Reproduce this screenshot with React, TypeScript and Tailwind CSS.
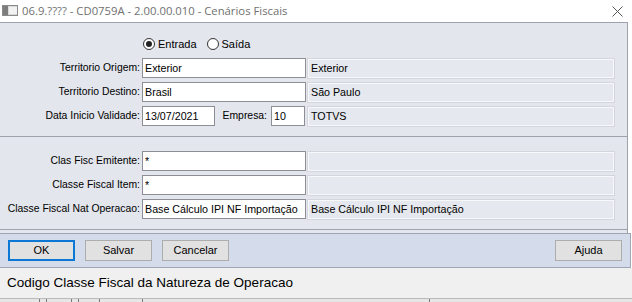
import React from "react";

const label = "text-[10.4px] text-black";
const font = { fontFamily: '"Liberation Sans", Arial, sans-serif' };

const Input = ({ value, w }: { value: string; w: string }) => (
  <div className={`${w} h-[20px] bg-white border border-[#8d8f94] flex items-center pl-[2px] text-[10.7px] text-black whitespace-nowrap overflow-hidden`}>
    {value}
  </div>
);

const ReadBox = ({ value }: { value?: string }) => (
  <div className="w-[306px] h-[19px] ml-auto bg-[#e5e8ee] border border-[#f7f8fa] outline outline-1 outline-[#d3d6dd] flex items-center pl-[2px] text-[10.7px] text-black whitespace-nowrap">
    {value}
  </div>
);

const Row = ({ title, children }: { title: string; children: React.ReactNode }) => (
  <div className="flex items-center h-[20px] pr-[13px]">
    <div className={`w-[142px] text-right pr-[2px] ${label} whitespace-nowrap`}>{title}</div>
    {children}
  </div>
);

const Radio = ({ checked, text }: { checked?: boolean; text: string }) => (
  <div className="flex items-center gap-[3px]">
    <div className="w-[12px] h-[12px] rounded-full border border-[#333] bg-white flex items-center justify-center">
      {checked && <div className="w-[6px] h-[6px] rounded-full bg-[#222]" />}
    </div>
    <span className="text-[11px] text-black">{text}</span>
  </div>
);

const Btn = ({ text, focus }: { text: string; focus?: boolean }) => (
  <button
    className={`w-[67px] h-[21px] bg-[#e1e1e1] text-[11px] text-black flex items-center justify-center ${
      focus ? "border-2 border-[#0a78d4]" : "border border-[#adadad]"
    }`}
  >
    {text}
  </button>
);

export default function App() {
  return (
    <div className="w-[632px] h-[302px] bg-white flex flex-col overflow-hidden" style={font}>
      {/* title bar */}
      <div className="h-[22px] flex items-center relative">
        <svg width="16" height="12" viewBox="0 0 16 12" className="ml-[2px] mt-[-1px]">
          <rect x="0.5" y="0.5" width="15" height="10" fill="#d8d8d8" stroke="#8a8a8a" />
          <rect x="1" y="1" width="5" height="9" fill="#7d7d7d" />
          <rect x="7" y="2" width="8" height="7" fill="#f2f2f2" />
        </svg>
        <span className="ml-[4px] text-[11.3px] text-[#707070] whitespace-nowrap" style={{ fontFamily: '"Open Sans", "Noto Sans", sans-serif' }}>
          06.9.???? - CD0759A - 2.00.00.010 - Cenários Fiscais
        </span>
        <svg width="11" height="11" viewBox="0 0 11 11" className="ml-auto mr-[9px]">
          <path d="M0.5 0.5 L10.5 10.5 M10.5 0.5 L0.5 10.5" stroke="#555" strokeWidth="1" />
        </svg>
      </div>

      {/* panel 1 */}
      <div className="w-[628px] h-[115px] bg-[#e3e6ed] border-t border-b border-r border-[#9ea2aa] flex flex-col">
        <div className="flex items-center gap-[10px] pl-[143px] mt-[14px] h-[14px]">
          <Radio checked text="Entrada" />
          <Radio text="Saída" />
        </div>
        <div className="flex flex-col gap-[4px] mt-[7px]">
          <Row title="Territorio Origem:">
            <Input value="Exterior" w="w-[164px]" />
            <ReadBox value="Exterior" />
          </Row>
          <Row title="Territorio Destino:">
            <Input value="Brasil" w="w-[164px]" />
            <ReadBox value="São Paulo" />
          </Row>
          <Row title="Data Inicio Validade:">
            <Input value="13/07/2021" w="w-[73px]" />
            <span className={`${label} w-[56px] text-right pr-[4px]`}>Empresa:</span>
            <Input value="10" w="w-[34px]" />
            <ReadBox value="TOTVS" />
          </Row>
        </div>
      </div>

      {/* panel 2 */}
      <div className="w-[628px] h-[93px] bg-[#e3e6ed] border-b border-r border-[#9ea2aa] flex flex-col">
        <div className="flex flex-col gap-[4px] mt-[14px]">
          <Row title="Clas Fisc Emitente:">
            <Input value="*" w="w-[164px]" />
            <ReadBox />
          </Row>
          <Row title="Classe Fiscal Item:">
            <Input value="*" w="w-[164px]" />
            <ReadBox />
          </Row>
          <Row title="Classe Fiscal Nat Operacao:">
            <Input value="Base Cálculo IPI NF Importação" w="w-[164px]" />
            <ReadBox value="Base Cálculo IPI NF Importação" />
          </Row>
        </div>
      </div>

      <div className="w-[628px] h-[3px] bg-[#e3e6ed] border-r border-[#9ea2aa]" />

      {/* button bar */}
      <div className="w-[631px] h-[35px] bg-[#d4dceb] border-y border-r border-[#9ea5b3] flex items-center px-[8px] gap-[10px]">
        <Btn text="OK" focus />
        <Btn text="Salvar" />
        <Btn text="Cancelar" />
        <div className="ml-auto">
          <Btn text="Ajuda" />
        </div>
      </div>

      {/* status bar */}
      <div className="h-[30px] bg-[#f0f0f0] flex items-center pl-[7px] text-[13.5px] text-black whitespace-nowrap">
        Codigo Classe Fiscal da Natureza de Operacao
      </div>
      <div className="flex-1 flex bg-[#e6e6e6] border-t border-[#b9b9b9]">
        <div className="w-[40px] border-r border-[#7a7a7a]" />
        <div className="w-[7px] border-r border-[#7a7a7a]" />
        <div className="w-[25px] border-r border-[#7a7a7a]" />
        <div className="w-[7px] border-r border-[#7a7a7a]" />
        <div className="w-[21px] border-r border-[#7a7a7a]" />
        <div className="w-[43px] border-r border-[#7a7a7a]" />
        <div className="w-[287px] border-r border-[#7a7a7a]" />
      </div>
    </div>
  );
}
